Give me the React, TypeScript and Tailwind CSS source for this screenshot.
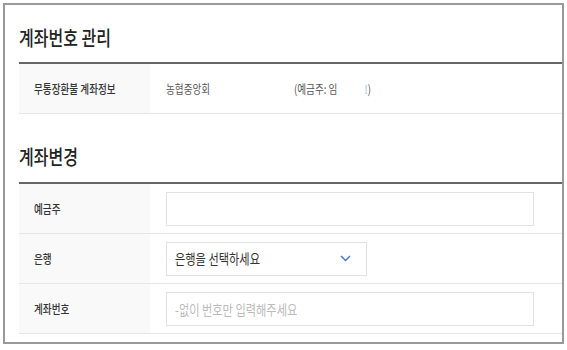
import React from "react";

// 글자가 가로로 눌려 보이는 원본에 맞춰 텍스트만 가로 80%로 줄임
const narrow = "inline-block origin-left scale-x-[0.8] whitespace-nowrap";

const Row = ({ label, children }: { label: string; children: React.ReactNode }) => (
  <div className="flex h-[50px] border-b border-[#e6e6e6]">
    <div className="w-[131px] bg-[#f9f9f9] flex items-center pl-[15px] text-[12px] font-medium text-[#333]">
      <span className={narrow}>{label}</span>
    </div>
    <div className="flex-1 flex items-center pl-[16px]">{children}</div>
  </div>
);

const TextField = ({ placeholder }: { placeholder?: string }) => (
  <div className="w-[368px] h-[34px] border border-[#e2e2e2] overflow-hidden flex items-center">
    <input
      type="text"
      placeholder={placeholder}
      className="w-[125%] shrink-0 h-full origin-left scale-x-[0.8] pl-[10px] text-[14px] text-[#333] placeholder:text-[#bbb] bg-transparent outline-none"
    />
  </div>
);

const App = () => {
  return (
    <div className="bg-white w-[567px] h-[350px] pt-[3px] pl-[3px] font-['Noto_Sans_CJK_KR','Noto_Sans',sans-serif]">
      <div className="w-[561px] h-[341px] border-2 border-[#999] pl-[14px]">
        <h2 className="pt-[23px] pb-[14px] text-[20px] leading-[20px] font-medium text-[#222]">
          <span className={narrow}>계좌번호 관리</span>
        </h2>
        <div className="h-[2px] bg-[#666]" />
        <Row label="무통장환불 계좌정보">
          <div className="w-[128px] text-[12px] text-[#555]">
            <span className={narrow}>농협중앙회</span>
          </div>
          <div className="text-[12px] text-[#555]">
            <span className={narrow}>
              (예금주: 임<span className="inline-block w-[34px]" />
              <span className="text-[#9fb3cc]">!</span>)
            </span>
          </div>
        </Row>

        <h2 className="pt-[33px] pb-[15px] text-[20px] leading-[20px] font-medium text-[#222]">
          <span className={narrow}>계좌변경</span>
        </h2>
        <div className="h-[2px] bg-[#666]" />
        <Row label="예금주">
          <TextField />
        </Row>
        <Row label="은행">
          <button
            type="button"
            className="w-[201px] h-[34px] border border-[#e2e2e2] flex items-center justify-between pl-[8px] pr-[15px] text-[14px] text-[#333] bg-white"
          >
            <span className={narrow}>은행을 선택하세요</span>
            <svg width="11" height="7" viewBox="0 0 11 7" fill="none">
              <path d="M1 1l4.5 4.5L10 1" stroke="#4a76c4" strokeWidth="1.5" />
            </svg>
          </button>
        </Row>
        <Row label="계좌번호">
          <TextField placeholder="-없이 번호만 입력해주세요" />
        </Row>
      </div>
    </div>
  );
};

export default App;
